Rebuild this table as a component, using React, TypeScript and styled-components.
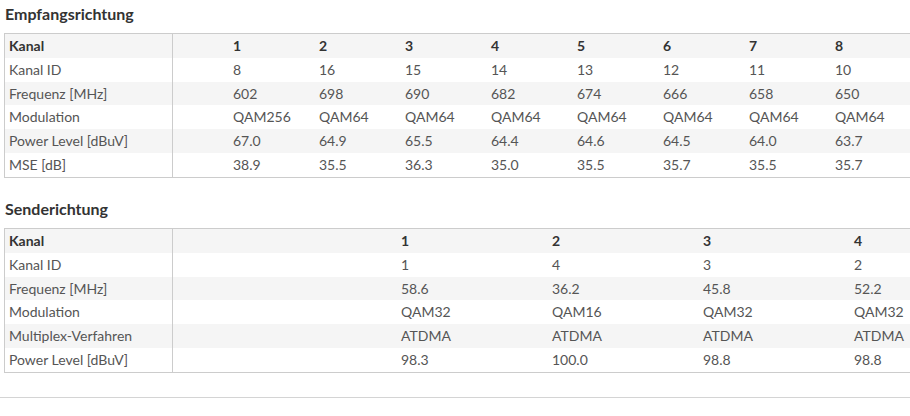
import React from 'react'
import styled, { createGlobalStyle } from 'styled-components'

type Row = { label: string; values: string[] }

const downstream: Row[] = [
  { label: 'Kanal', values: ['1', '2', '3', '4', '5', '6', '7', '8'] },
  { label: 'Kanal ID', values: ['8', '16', '15', '14', '13', '12', '11', '10'] },
  {
    label: 'Frequenz [MHz]',
    values: ['602', '698', '690', '682', '674', '666', '658', '650'],
  },
  {
    label: 'Modulation',
    values: ['QAM256', 'QAM64', 'QAM64', 'QAM64', 'QAM64', 'QAM64', 'QAM64', 'QAM64'],
  },
  {
    label: 'Power Level [dBuV]',
    values: ['67.0', '64.9', '65.5', '64.4', '64.6', '64.5', '64.0', '63.7'],
  },
  {
    label: 'MSE [dB]',
    values: ['38.9', '35.5', '36.3', '35.0', '35.5', '35.7', '35.5', '35.7'],
  },
]

const upstream: Row[] = [
  { label: 'Kanal', values: ['1', '2', '3', '4'] },
  { label: 'Kanal ID', values: ['1', '4', '3', '2'] },
  { label: 'Frequenz [MHz]', values: ['58.6', '36.2', '45.8', '52.2'] },
  { label: 'Modulation', values: ['QAM32', 'QAM16', 'QAM32', 'QAM32'] },
  { label: 'Multiplex-Verfahren', values: ['ATDMA', 'ATDMA', 'ATDMA', 'ATDMA'] },
  { label: 'Power Level [dBuV]', values: ['98.3', '100.0', '98.8', '98.8'] },
]

const GlobalStyle = createGlobalStyle`
  body {
    margin: 0;
    background: #fff;
    font-family: Lato, "Open Sans", sans-serif;
    overflow: hidden;
  }
`

const Page = styled.div`
  width: 910px;
  padding-top: 4px;
`

const Section = styled.section`
  & + & {
    margin-top: 21px;
  }
`

const Heading = styled.h3`
  margin: 0;
  padding-left: 5px;
  height: 29px;
  font-size: 16px;
  line-height: 20px;
  font-weight: 700;
  color: #333;
`

const Table = styled.div<{ $columns: string }>`
  display: grid;
  grid-template-columns: ${({ $columns }) => $columns};
  grid-auto-rows: 23.84px;
  margin-left: 4px;
  width: 906px;
  border-top: 1px solid #cccccc;
  border-bottom: 1px solid #cccccc;
  border-left: 1px solid #cccccc;
`

const Line = styled.div<{ $striped: boolean; $head: boolean }>`
  display: contents;
  & > div {
    background: ${({ $striped }) => ($striped ? '#f5f5f5' : '#fff')};
    font-weight: ${({ $head }) => ($head ? 700 : 400)};
    color: ${({ $head }) => ($head ? '#333' : '#555')};
  }
`

const Label = styled.div`
  line-height: 23px;
  padding-left: 4px;
  font-size: 14px;
  border-right: 1px solid #cccccc;
  white-space: nowrap;
`

const Spacer = styled.div``

const Cell = styled.div`
  line-height: 23px;
  padding-left: 6px;
  font-size: 14px;
  white-space: nowrap;
`

const Divider = styled.hr`
  margin: 24px 0 0;
  border: 0;
  border-top: 1px solid #d4d4d4;
`

const DataTable = ({ rows, columns }: { rows: Row[]; columns: string }) => (
  <Table $columns={columns}>
    {rows.map((row, i) => (
      <Line key={row.label} $striped={i % 2 === 0} $head={i === 0}>
        <Label>{row.label}</Label>
        <Spacer />
        {row.values.map((v, j) => (
          <Cell key={j}>{v}</Cell>
        ))}
      </Line>
    ))}
  </Table>
)

const App = () => (
  <Page>
    <GlobalStyle />
    <Section>
      <Heading>Empfangsrichtung</Heading>
      <DataTable rows={downstream} columns="168px 54px repeat(7, 86px) 1fr" />
    </Section>
    <Section>
      <Heading>Senderichtung</Heading>
      <DataTable rows={upstream} columns="168px 222px repeat(3, 151px) 1fr" />
    </Section>
    <Divider />
  </Page>
)

export default App
